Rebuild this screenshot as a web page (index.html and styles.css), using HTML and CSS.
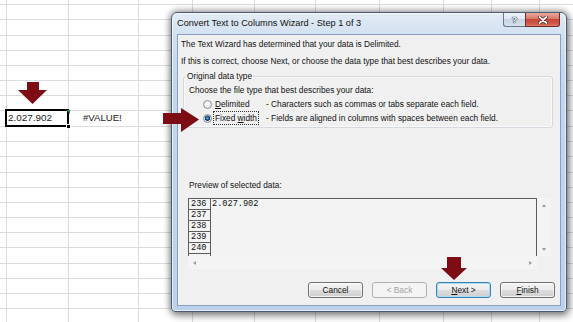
FILE: index.html
```html
<!DOCTYPE html>
<html>
<head>
<meta charset="utf-8">
<link rel="stylesheet" href="styles.css">
</head>
<body>
<div class="sheet">
  <div class="cells">
    <svg class="arrow-cell" width="29" height="22" viewBox="0 0 29 22"><polygon points="9,0 21,0 21,8 29,8 14.5,22 0,8 9,8" fill="#7e0c15"/></svg>
    <div class="cellrow">
      <div class="cell active">2.027.902<span class="err"></span><span class="handle"></span></div>
      <div class="cell value">#VALUE!</div>
    </div>
  </div>

  <div class="window">
    <div class="titlebar">
      <div class="title">Convert Text to Columns Wizard - Step 1 of 3</div>
      <div class="caption">
        <div class="cap help">?</div>
        <div class="cap close"><svg width="10" height="8" viewBox="0 0 10 8"><path d="M1.5,1 L8.5,7 M8.5,1 L1.5,7" stroke="#4a1a16" stroke-width="3.2" stroke-linecap="round"/><path d="M1.5,1 L8.5,7 M8.5,1 L1.5,7" stroke="#fff" stroke-width="1.7" stroke-linecap="round"/></svg></div>
      </div>
    </div>
    <div class="client">
      <p class="line first">The Text Wizard has determined that your data is Delimited.</p>
      <p class="line second">If this is correct, choose Next, or choose the data type that best describes your data.</p>
      <fieldset class="group">
        <legend>Original data type</legend>
        <div class="choose">Choose the file type that best describes your data:</div>
        <div class="radio-row"><span class="radio"></span><span class="lbl"><u>D</u>elimited</span><span class="desc">- Characters such as commas or tabs separate each field.</span></div>
        <div class="radio-row"><span class="radio on"></span><span class="lbl"><span class="focus">Fixed <u>w</u>idth</span></span><span class="desc">- Fields are aligned in columns with spaces between each field.</span></div>
      </fieldset>
      <div class="preview-label">Preview of selected data:</div>
      <div class="preview">
        <div class="data">
          <div class="nums">
            <div class="num">236</div>
            <div class="num">237</div>
            <div class="num">238</div>
            <div class="num">239</div>
            <div class="num">240</div>
          </div>
          <div class="vals"><div class="val">2.027.902</div></div>
        </div>
        <div class="vscroll"><span class="tri up"></span><span class="tri down"></span></div>
        <div class="hscroll"><span class="tri left"></span><span class="tri right"></span></div>
        <div class="corner"></div>
      </div>
      <div class="buttons">
        <div class="btn">Cancel</div>
        <div class="btn disabled">&lt; Back</div>
        <div class="btn default"><u>N</u>ext &gt;</div>
        <div class="btn"><u>F</u>inish</div>
      </div>
    </div>
  </div>

  <svg class="arrow arrow-right" width="37" height="24" viewBox="0 0 37 24"><polygon points="0,5 18,5 18,0 36,11.5 18,24 18,16 0,16" fill="#7e0c15"/></svg>
  <svg class="arrow arrow-next" width="26" height="23" viewBox="0 0 26 23"><polygon points="6,0 20,0 20,11 26,11 13,23 0,11 6,11" fill="#7e0c15"/></svg>
</div>
</body>
</html>
```
FILE: styles.css
```css
html, body {
  margin: 0;
  padding: 0;
  background: #fff;
}

.sheet {
  position: relative;
  width: 573px;
  height: 322px;
  overflow: hidden;
  font-family: "Liberation Sans", Arial, sans-serif;
  background-color: #fff;
  --g: linear-gradient(#dadcdd, #dadcdd);
  background-image:
    var(--g), var(--g), var(--g), var(--g), var(--g), var(--g), var(--g), var(--g), var(--g), var(--g),
    var(--g), var(--g), var(--g), var(--g), var(--g), var(--g), var(--g), var(--g), var(--g), var(--g),
    var(--g), var(--g), var(--g), var(--g), var(--g), var(--g), var(--g), var(--g), var(--g), var(--g),
    var(--g);
  background-repeat: no-repeat;
  background-size:
    1px 100%, 1px 100%, 1px 100%, 1px 100%, 1px 100%, 1px 100%, 1px 100%, 1px 100%, 1px 100%, 1px 100%,
    100% 1px, 100% 1px, 100% 1px, 100% 1px, 100% 1px, 100% 1px, 100% 1px, 100% 1px, 100% 1px, 100% 1px,
    100% 1px, 100% 1px, 100% 1px, 100% 1px, 100% 1px, 100% 1px, 100% 1px, 100% 1px, 100% 1px, 100% 1px,
    100% 1px;
  background-position:
    6px 0, 68px 0, 138px 0, 192px 0, 254px 0, 315px 0, 379px 0, 443px 0, 491px 0, 539px 0,
    0 4px, 0 19px, 0 35px, 0 50px, 0 65px, 0 80px, 0 95px, 0 110px, 0 126px, 0 141px,
    0 156px, 0 172px, 0 187px, 0 202px, 0 217px, 0 232px, 0 247px, 0 263px, 0 278px, 0 293px,
    0 308px;
}

/* spreadsheet cells */
.cells {
  padding-top: 82px;
}
.arrow-cell {
  display: block;
  margin-left: 18px;
}
.cellrow {
  display: flex;
  margin-top: 5px;
}
.cell {
  position: relative;
  height: 18px;
  box-sizing: border-box;
  font-size: 9.9px;
  line-height: 14px;
  color: #222;
}
.cell.active {
  margin-left: 5px;
  width: 64px;
  border: 2px solid #000;
  padding-left: 1px;
  background: #fff;
}
.cell.value {
  padding: 2px 0 0 14px;
  font-size: 9.6px;
}
.err {
  position: absolute;
  right: -3px;
  top: -1px;
  width: 0;
  height: 0;
  border-top: 4px solid #1e8a3a;
  border-left: 4px solid transparent;
}
.handle {
  position: absolute;
  right: -4px;
  bottom: -4px;
  width: 5px;
  height: 5px;
  background: #000;
  border: 1px solid #fff;
  box-sizing: border-box;
}

/* dialog window */
.window {
  position: absolute;
  left: 171px;
  top: 12px;
  width: 396px;
  height: 300px;
  box-sizing: border-box;
  border: 1px solid #4a5b72;
  border-radius: 6px 6px 4px 4px;
  padding: 0 5px 5px;
  display: flex;
  flex-direction: column;
  background: linear-gradient(#e3ebf5 0, #d3e1f1 20px, #c3d7ee 60px, #bcd2ec 100%);
  box-shadow: 0 0 7px 1px rgba(0, 0, 0, 0.45), 2px 4px 8px rgba(0, 0, 0, 0.3), inset 0 0 0 1px rgba(255, 255, 255, 0.6);
}
.titlebar {
  height: 21px;
  display: flex;
  justify-content: space-between;
  align-items: flex-start;
}
.title {
  font-size: 9.2px;
  line-height: 21px;
  color: #111;
}
.caption {
  display: flex;
  margin-right: 1px;
}
.cap {
  height: 14px;
  box-sizing: border-box;
  display: flex;
  align-items: center;
  justify-content: center;
  border: 1px solid #6b7890;
  border-top: none;
}
.help {
  width: 22px;
  border-radius: 0 0 0 3px;
  border-right: none;
  background: linear-gradient(#eef3f9, #dde6f1 50%, #c9d5e4 50%, #d6e0ec);
  font-size: 9px;
  font-weight: bold;
  color: #f4f6f9;
  text-shadow: 0 0 1px #2d3a4c, 0 0 1px #2d3a4c, 0 0 1px #2d3a4c;
}
.close {
  width: 35px;
  border-radius: 0 0 3px 0;
  border-color: #6e2c26;
  background: linear-gradient(#e9a99e, #d7776a 45%, #c7463a 50%, #d25a4c 85%, #e08070);
}

.client {
  flex: 1;
  background: #f0f0f0;
  border: 1px solid #8aa0bc;
  font-size: 8.3px;
  color: #111;
  display: flex;
  flex-direction: column;
}
.line {
  margin: 0;
  line-height: 13px;
  padding-left: 3px;
}
.line.first {
  padding-top: 3px;
}
.line.second {
  margin-top: 4px;
}
.group {
  margin: 2px 7px 0 5px;
  padding: 0 0 2px 2px;
  border: 1px solid #d3d9de;
  border-radius: 3px;
  box-shadow: inset 0 0 0 1px #fafafa;
}
.group legend {
  padding: 0 1px;
  line-height: 13px;
}
.choose {
  margin-left: 3px;
  padding-top: 1px;
  line-height: 13px;
}
.radio-row {
  display: flex;
  align-items: center;
  height: 14px;
  padding-left: 17px;
}
.radio {
  width: 9px;
  height: 9px;
  box-sizing: border-box;
  border-radius: 50%;
  border: 1px solid #8c9197;
  background: radial-gradient(circle at 50% 40%, #fdfdfd, #dcdedf);
  margin-right: 3px;
}
.radio.on {
  background: radial-gradient(circle at 50% 45%, #6fb3e6 0, #2a6aa5 1.3px, #0e3d66 2.4px, #d8dadb 2.9px, #f6f6f6 100%);
}
.lbl {
  width: 51px;
  white-space: nowrap;
}
.focus {
  outline: 1px dotted #333;
  outline-offset: 1px;
}
.desc {
  white-space: nowrap;
}
.preview-label {
  margin: 51px 0 0 11px;
  line-height: 13px;
}
.preview {
  margin: 6px 0 0 10px;
  display: grid;
  grid-template-columns: 349px 14px;
  grid-template-rows: 58px 13px;
}
.data {
  display: flex;
  border: 1px solid #5d5d5d;
  border-bottom: none;
  background: #f3f3f3;
  font-family: "Liberation Mono", "Courier New", monospace;
  font-size: 8.6px;
  color: #111;
}
.nums {
  width: 21px;
  border-right: 1px solid #5d5d5d;
}
.num {
  height: 10px;
  line-height: 11px;
  border-bottom: 1px solid #5d5d5d;
  padding-left: 2px;
}
.vals {
  padding-left: 1px;
}
.val {
  height: 11px;
  line-height: 11px;
}
.vscroll {
  background: #f4f4f4;
  display: flex;
  flex-direction: column;
  justify-content: space-between;
  align-items: center;
  padding: 6px 0 5px;
}
.hscroll {
  background: #f4f4f4;
  display: flex;
  justify-content: space-between;
  align-items: center;
  padding: 0 5px;
}
.corner {
  background: #f0f0f0;
}
.tri {
  width: 0;
  height: 0;
}
.tri.up {
  border-left: 2.5px solid transparent;
  border-right: 2.5px solid transparent;
  border-bottom: 3px solid #9c9c9c;
}
.tri.down {
  border-left: 2.5px solid transparent;
  border-right: 2.5px solid transparent;
  border-top: 3px solid #9c9c9c;
}
.tri.left {
  border-top: 2.5px solid transparent;
  border-bottom: 2.5px solid transparent;
  border-right: 3px solid #9c9c9c;
}
.tri.right {
  border-top: 2.5px solid transparent;
  border-bottom: 2.5px solid transparent;
  border-left: 3px solid #9c9c9c;
}
.buttons {
  display: flex;
  justify-content: flex-end;
  gap: 9px;
  margin-top: 13px;
  padding-right: 5px;
}
.btn {
  width: 55px;
  height: 16px;
  box-sizing: border-box;
  border: 1px solid #707070;
  border-radius: 3px;
  background: linear-gradient(#f3f3f3, #ebebeb 50%, #dddddd 50%, #cfcfcf);
  box-shadow: inset 0 0 0 1px rgba(255, 255, 255, 0.7);
  display: flex;
  align-items: center;
  justify-content: center;
  color: #111;
}
.btn.disabled {
  border-color: #adb2b5;
  background: #f4f4f4;
  color: #a2a2a2;
  box-shadow: none;
}
.btn.default {
  border-color: #3c7fb1;
  box-shadow: inset 0 0 0 1px #a9dcf6;
}

/* callout arrows lying over the dialog */
.arrow {
  position: absolute;
  display: block;
}
.arrow-right {
  left: 163px;
  top: 108px;
}
.arrow-next {
  left: 441px;
  top: 257px;
}
```
